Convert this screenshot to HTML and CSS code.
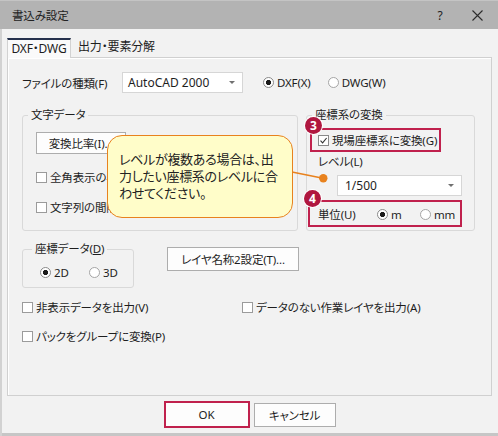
FILE: index.html
```html
<!DOCTYPE html>
<html lang="ja">
<head>
<meta charset="utf-8">
<title>書込み設定</title>
<link rel="stylesheet" href="styles.css">
</head>
<body>
<div class="window">
  <div class="titlebar">
    <span class="title">書込み設定</span>
    <span class="help">?</span>
    <span class="close"><svg width="11" height="11" viewBox="0 0 11 11"><path d="M0.5 0.5 L10.5 10.5 M10.5 0.5 L0.5 10.5" stroke="#2b2b2b" stroke-width="1.1" fill="none"/></svg></span>
  </div>
  <div class="body">
    <div class="tabs">
      <div class="tab active">DXF・DWG</div>
      <div class="tab">出力・要素分解</div>
    </div>
    <div class="panel">
      <div class="row-file">
        <span class="label-file">ファイルの種類(F)</span>
        <div class="combo combo-file"><span>AutoCAD 2000</span><span class="arrow"></span></div>
        <span class="radio radio-dxf"><span class="dot on"></span>DXF(X)</span>
        <span class="radio radio-dwg"><span class="dot"></span>DWG(W)</span>
      </div>
      <div class="row-groups">
        <fieldset class="group g-text">
          <legend>文字データ</legend>
          <div class="btn btn-ratio">変換比率(I)...</div>
          <div class="check check-1"><span class="box"></span>全角表示の半角変換(Z)</div>
          <div class="check check-2"><span class="box"></span>文字列の間隔を調整(S)</div>
        </fieldset>
        <fieldset class="group g-coordsys">
          <legend>座標系の変換</legend>
          <div class="check"><span class="box checked"><svg width="9" height="9" viewBox="0 0 9 9"><path d="M1.5 4.6 L3.6 6.8 L7.6 2" stroke="#333" stroke-width="1.1" fill="none"/></svg></span>現場座標系に変換(G)</div>
          <div class="level-label">レベル(L)</div>
          <div class="combo combo-level"><span>1/500</span><span class="arrow"></span></div>
          <div class="unit-row">
            <span class="unit-label">単位(U)</span>
            <span class="radio radio-m"><span class="dot on"></span>m</span>
            <span class="radio"><span class="dot"></span>mm</span>
          </div>
        </fieldset>
      </div>
      <div class="row-coord">
        <fieldset class="group g-coord">
          <legend>座標データ(<u>D</u>)</legend>
          <div class="radio-row">
            <span class="radio radio-2d"><span class="dot on"></span>2D</span>
            <span class="radio"><span class="dot"></span>3D</span>
          </div>
        </fieldset>
        <div class="btn btn-layer">レイヤ名称2設定(T)...</div>
      </div>
      <div class="row-checks">
        <div class="check check-hidden"><span class="box"></span>非表示データを出力(V)</div>
        <div class="check"><span class="box"></span>データのない作業レイヤを出力(A)</div>
      </div>
      <div class="row-checks row-pack">
        <div class="check"><span class="box"></span>パックをグループに変換(P)</div>
      </div>
    </div>
    <div class="buttons">
      <div class="ok-wrap"><div class="btn btn-ok">OK</div></div>
      <div class="btn btn-cancel">キャンセル</div>
    </div>
  </div>

  <div class="mark mark-3"></div>
  <div class="mark mark-4"></div>
  <div class="badge badge-3">3</div>
  <div class="badge badge-4">4</div>
  <svg class="connector" width="498" height="436" viewBox="0 0 498 436">
    <line x1="292" y1="172" x2="323" y2="178.3" stroke="#e8821e" stroke-width="1.5"/>
    <circle cx="323.3" cy="178.3" r="4.2" fill="#e8821e"/>
  </svg>
  <div class="bubble">レベルが複数ある場合は、出<br>力したい座標系のレベルに合<br>わせてください。</div>
</div>
</body>
</html>
```

FILE: styles.css
```css
html, body {
  margin: 0;
  padding: 0;
}
body {
  width: 498px;
  height: 436px;
  overflow: hidden;
  background: #f2f2f2;
}
.window {
  position: relative;
  width: 498px;
  height: 436px;
  box-sizing: border-box;
  background: #f2f2f2;
  box-shadow: inset 2px 0 0 #d2d2d2, inset 0 -3px 0 #c6c6c6;
  font-family: "Noto Sans", "Noto Sans CJK JP", sans-serif;
  font-size: 11.5px;
  letter-spacing: -0.15px;
  color: #1e1e1e;
  font-feature-settings: "palt";
  overflow: hidden;
}
.titlebar {
  height: 29px;
  box-sizing: border-box;
  background: #b3b3b3;
  border-top: 1px solid #c4c4c4;
  display: flex;
  align-items: center;
  padding-left: 12px;
  padding-right: 11px;
}
.title {
  flex: 1;
  color: #222;
}
.help {
  width: 20px;
  text-align: center;
  font-size: 12px;
  color: #222;
}
.close {
  width: 20px;
  margin-left: 17px;
  display: flex;
  justify-content: center;
}
.body {
  padding: 9px 6px 0 7px;
}
.tabs {
  display: flex;
  height: 19px;
}
.tab {
  height: 20px;
  box-sizing: border-box;
  line-height: 18px;
  font-size: 12px;
}
.tab.active {
  width: 64px;
  text-align: center;
  background: #fafafa;
  border-top: 2px solid #24304c;
  border-left: 1px solid #d2d2d2;
  border-right: 1px solid #d2d2d2;
  position: relative;
  z-index: 1;
  line-height: 17px;
}
.tab + .tab {
  padding-left: 7px;
}
.panel {
  height: 339px;
  box-sizing: border-box;
  border: 1px solid #d0d0d0;
  box-shadow: inset 1px 1px 0 #fff;
  padding: 14px 0 0 14px;
}
.row-file {
  display: flex;
  align-items: center;
  height: 21px;
}
.label-file {
  width: 100px;
}
.combo {
  box-sizing: border-box;
  height: 21px;
  background: #fff;
  border: 1px solid #d6d6d6;
  display: flex;
  align-items: center;
  justify-content: space-between;
  padding: 0 7px 0 5px;
  font-size: 12px;
  letter-spacing: 0;
}
.combo-file {
  width: 121px;
}
.arrow {
  width: 0;
  height: 0;
  border-left: 3px solid transparent;
  border-right: 3px solid transparent;
  border-top: 3px solid #707070;
}
.radio {
  display: inline-flex;
  align-items: center;
  gap: 3px;
  height: 16px;
}
.dot {
  width: 11px;
  height: 11px;
  box-sizing: border-box;
  border-radius: 50%;
  border: 1px solid #a5a5a5;
  background: #fff;
  display: inline-block;
}
.dot.on {
  background: radial-gradient(circle, #1a1a1a 0 2.4px, #fff 2.9px);
  border-color: #8a8a8a;
}
.radio-dxf {
  margin-left: 20px;
}
.radio-dwg {
  margin-left: 17px;
}
.row-groups {
  display: flex;
  gap: 8px;
  margin-top: 14px;
}
.group {
  margin: 0;
  box-sizing: border-box;
  border: 1px solid #d9d9d9;
  border-radius: 3px;
  min-width: 0;
}
.group legend {
  padding: 0 3px;
  line-height: 16px;
}
.g-text {
  width: 276px;
  height: 124px;
  padding: 9px 13px 0 13px;
}
.g-text legend {
  margin-left: -8px;
}
.g-coordsys {
  width: 169px;
  height: 124px;
  padding: 9px 11px 0 11px;
}
.g-coordsys legend {
  margin-left: -6px;
}
.btn {
  box-sizing: border-box;
  background: #fdfdfd;
  border: 1px solid #adadad;
  display: flex;
  align-items: center;
  justify-content: center;
}
.btn-ratio {
  width: 90px;
  height: 22px;
}
.check {
  display: flex;
  align-items: center;
  gap: 3px;
  height: 16px;
  white-space: nowrap;
}
.box {
  width: 11px;
  height: 11px;
  box-sizing: border-box;
  border: 1px solid #9b9b9b;
  background: #fff;
  display: inline-flex;
  align-items: center;
  justify-content: center;
  flex: none;
}
.box.checked {
  border-color: #8a8a8a;
}
.check-1 {
  margin-top: 15px;
}
.check-2 {
  margin-top: 14px;
}
.level-label {
  margin-top: 6px;
  height: 16px;
  line-height: 16px;
}
.combo-level {
  margin-top: 5px;
  margin-left: 19px;
  width: 125px;
  padding-left: 7px;
}
.unit-row {
  display: flex;
  align-items: center;
  height: 16px;
  margin-top: 10px;
}
.unit-label {
  width: 59px;
}
.radio-m {
  width: 43px;
}
.row-coord {
  display: flex;
  align-items: flex-start;
  margin-top: 10px;
}
.g-coord {
  width: 112px;
  height: 47px;
  padding: 7px 0 0 17px;
}
.g-coord legend {
  margin-left: -8px;
}
.radio-row {
  display: flex;
  height: 16px;
}
.radio-2d {
  width: 49px;
}
.btn-layer {
  width: 132px;
  height: 24px;
  margin-left: 33px;
  margin-top: 6px;
}
.row-checks {
  display: flex;
  margin-top: 11px;
}
.row-pack {
  margin-top: 13px;
}
.check-hidden {
  width: 220px;
}
.buttons {
  display: flex;
  justify-content: center;
  align-items: center;
  gap: 4px;
  margin-top: 5px;
}
.ok-wrap {
  border: 2px solid #c0214d;
  display: flex;
}
.btn-ok {
  width: 82px;
  height: 23px;
  border-color: #fdfdfd;
}
.btn-cancel {
  width: 82px;
  height: 24px;
}
.mark {
  position: absolute;
  box-sizing: border-box;
  border: 2px solid #c0214d;
}
.mark-3 {
  left: 310px;
  top: 128px;
  width: 131px;
  height: 24px;
}
.mark-4 {
  left: 308px;
  top: 200px;
  width: 154px;
  height: 27px;
}
.badge {
  position: absolute;
  width: 17px;
  height: 17px;
  border-radius: 50%;
  background: #b0173f;
  color: #fff;
  font-weight: bold;
  font-size: 12px;
  letter-spacing: 0;
  line-height: 17px;
  text-align: center;
  box-shadow: 0 0 0 1px #fff;
}
.badge-3 {
  left: 305px;
  top: 117px;
}
.badge-4 {
  left: 304px;
  top: 190px;
}
.connector {
  position: absolute;
  left: 0;
  top: 0;
  pointer-events: none;
}
.bubble {
  position: absolute;
  left: 107px;
  top: 135px;
  width: 186px;
  height: 83px;
  box-sizing: border-box;
  background: #fffdc9;
  border: 1.5px solid #e8821e;
  border-radius: 15px;
  padding: 15px 0 0 11px;
  font-size: 13px;
  letter-spacing: -0.3px;
  line-height: 17px;
  color: #222;
  white-space: nowrap;
}
```
